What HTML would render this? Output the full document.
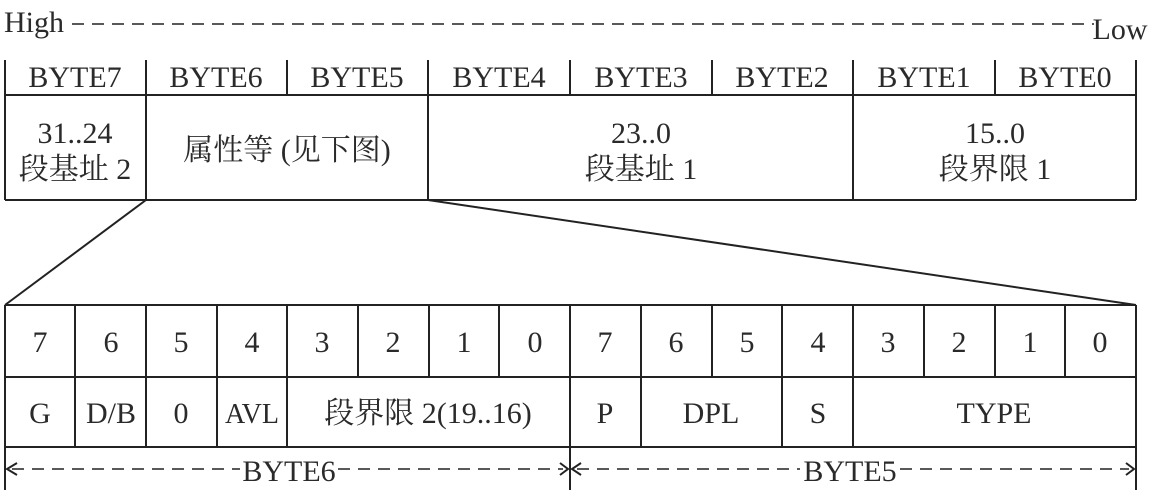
<!DOCTYPE html>
<html><head><meta charset="utf-8"><style>
html,body{margin:0;padding:0;background:#fff;}
svg{display:block;}
text{font-family:"Liberation Serif","Noto Serif CJK SC",serif;fill:#2a2a2a;text-anchor:middle;}
</style></head><body>
<svg width="1161" height="502" viewBox="0 0 1161 502" xmlns="http://www.w3.org/2000/svg">
<g stroke="#222" stroke-width="2" fill="none">
<line x1="72" y1="24" x2="1094" y2="24" stroke-dasharray="12,8" stroke-width="1.5"/>
<line x1="5" y1="60" x2="5" y2="200"/>
<line x1="146" y1="60" x2="146" y2="200"/>
<line x1="287" y1="60" x2="287" y2="95"/>
<line x1="428" y1="60" x2="428" y2="200"/>
<line x1="570" y1="60" x2="570" y2="95"/>
<line x1="712" y1="60" x2="712" y2="95"/>
<line x1="853" y1="60" x2="853" y2="200"/>
<line x1="995" y1="60" x2="995" y2="95"/>
<line x1="1136" y1="60" x2="1136" y2="200"/>
<line x1="5" y1="95" x2="1136" y2="95"/>
<line x1="5" y1="200" x2="1136" y2="200"/>
<line x1="146" y1="200" x2="5" y2="305"/>
<line x1="428" y1="200" x2="1136" y2="305"/>
<line x1="5" y1="305" x2="1136" y2="305"/>
<line x1="5" y1="377" x2="1136" y2="377"/>
<line x1="5" y1="447" x2="1136" y2="447"/>
<line x1="5" y1="305" x2="5" y2="490"/>
<line x1="570" y1="305" x2="570" y2="490"/>
<line x1="1136" y1="305" x2="1136" y2="490"/>
<line x1="75" y1="305" x2="75" y2="447"/>
<line x1="146" y1="305" x2="146" y2="447"/>
<line x1="217" y1="305" x2="217" y2="447"/>
<line x1="287" y1="305" x2="287" y2="447"/>
<line x1="358" y1="305" x2="358" y2="377"/>
<line x1="429" y1="305" x2="429" y2="377"/>
<line x1="499" y1="305" x2="499" y2="377"/>
<line x1="641" y1="305" x2="641" y2="447"/>
<line x1="712" y1="305" x2="712" y2="377"/>
<line x1="782" y1="305" x2="782" y2="447"/>
<line x1="853" y1="305" x2="853" y2="447"/>
<line x1="924" y1="305" x2="924" y2="377"/>
<line x1="995" y1="305" x2="995" y2="377"/>
<line x1="1065" y1="305" x2="1065" y2="377"/>
<g stroke-width="1.5" stroke-dasharray="12,8">
<line x1="12" y1="469" x2="240" y2="469"/>
<line x1="338" y1="469" x2="563" y2="469"/>
<line x1="577" y1="469" x2="800" y2="469"/>
<line x1="900" y1="469" x2="1129" y2="469"/>
</g>
<path d="M17 463 L7 469 L17 475 M560 463 L568 469 L560 475 M581 463 L572 469 L581 475 M1126 463 L1134 469 L1126 475" stroke-width="2"/>
</g>
<g font-size="30">
<text x="34" y="32">High</text>
<text x="1120" y="39">Low</text>
<text x="75" y="87">BYTE7</text>
<text x="216" y="87">BYTE6</text>
<text x="357" y="87">BYTE5</text>
<text x="499" y="87">BYTE4</text>
<text x="641" y="87">BYTE3</text>
<text x="782" y="87">BYTE2</text>
<text x="924" y="87">BYTE1</text>
<text x="1065" y="87">BYTE0</text>
<text x="75" y="143">31..24</text>
<text x="75" y="179">段基址 2</text>
<text x="287" y="160">属性等 (见下图)</text>
<text x="641" y="143">23..0</text>
<text x="641" y="179">段基址 1</text>
<text x="995" y="143">15..0</text>
<text x="995" y="179">段界限 1</text>
<text x="40" y="352">7</text><text x="111" y="352">6</text><text x="181" y="352">5</text><text x="252" y="352">4</text>
<text x="322" y="352">3</text><text x="393" y="352">2</text><text x="464" y="352">1</text><text x="535" y="352">0</text>
<text x="605" y="352">7</text><text x="676" y="352">6</text><text x="747" y="352">5</text><text x="818" y="352">4</text>
<text x="888" y="352">3</text><text x="959" y="352">2</text><text x="1030" y="352">1</text><text x="1100" y="352">0</text>
<text x="40" y="423">G</text>
<text x="111" y="423">D/B</text>
<text x="181" y="423">0</text>
<text x="252" y="423" font-size="28">AVL</text>
<text x="428" y="423">段界限 2(19..16)</text>
<text x="605" y="423">P</text>
<text x="711" y="423">DPL</text>
<text x="818" y="423">S</text>
<text x="994" y="423">TYPE</text>
<text x="289" y="481">BYTE6</text>
<text x="850" y="481">BYTE5</text>
</g>
</svg>
</body></html>
